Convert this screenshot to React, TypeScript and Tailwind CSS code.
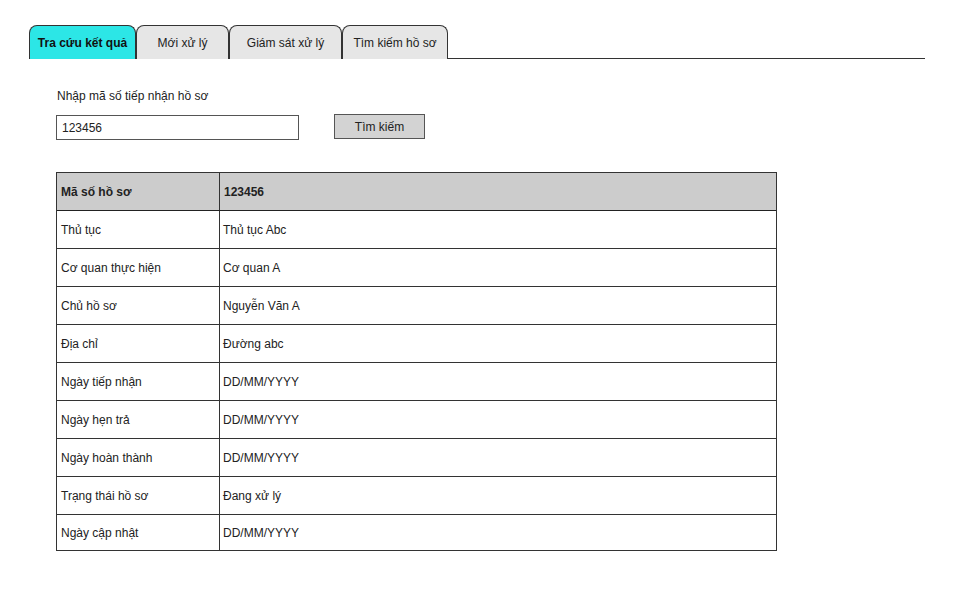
import React from "react";

const rows: [string, string][] = [
  ["Thủ tục", "Thủ tục Abc"],
  ["Cơ quan thực hiện", "Cơ quan A"],
  ["Chủ hồ sơ", "Nguyễn Văn A"],
  ["Địa chỉ", "Đường abc"],
  ["Ngày tiếp nhận", "DD/MM/YYYY"],
  ["Ngày hẹn trả", "DD/MM/YYYY"],
  ["Ngày hoàn thành", "DD/MM/YYYY"],
  ["Trạng thái hồ sơ", "Đang xử lý"],
  ["Ngày cập nhật", "DD/MM/YYYY"],
];

const tabs = [
  { label: "Tra cứu kết quả", w: "w-[107px]", active: true },
  { label: "Mới xử lý", w: "w-[93px]", active: false },
  { label: "Giám sát xử lý", w: "w-[113px]", active: false },
  { label: "Tìm kiếm hồ sơ", w: "w-[106px]", active: false },
];

export default function App() {
  return (
    <div className="w-[960px] h-[600px] bg-white text-[12px] text-[#222] font-['Liberation_Sans',sans-serif] pt-[24px]">
      <div className="ml-[29px] w-[896px] flex items-end border-b-[1.5px] border-[#333] h-[35px]">
        {tabs.map((t) => (
          <div
            key={t.label}
            className={`${t.w} h-[34px] -mb-[1px] flex items-center justify-center rounded-t-[8px] border-[1.5px] border-[#333] border-b-0 ${
              t.active ? "bg-[#2ce6e6] font-bold text-[#111]" : "bg-[#e6e6e6]"
            }`}
          >
            {t.label}
          </div>
        ))}
      </div>

      <div className="ml-[57px] mt-[28px]">Nhập mã số tiếp nhận hồ sơ</div>

      <div className="ml-[56px] mt-[9px] flex items-start gap-[35px]">
        <div className="mt-[1px] w-[243px] h-[25px] border-[1.5px] border-[#555] flex items-center px-[5px]">123456</div>
        <div className="w-[91px] h-[25px] border-[1.5px] border-[#555] bg-[#d3d3d3] flex items-center justify-center">Tìm kiếm</div>
      </div>

      <div className="ml-[56px] mt-[32px] w-[721px] border-[1.5px] border-[#333]">
        <div className="flex h-[38px] bg-[#cccccc] border-b-[1.5px] border-[#222] font-bold">
          <div className="w-[163px] border-r-[1.5px] border-[#333] flex items-center px-[4px]">Mã số hồ sơ</div>
          <div className="flex-1 flex items-center px-[4px]">123456</div>
        </div>
        {rows.map(([a, b], i) => (
          <div
            key={a}
            className={`flex ${i < rows.length - 1 ? "h-[38px] border-b-[1.5px] border-[#333]" : "h-[35px]"}`}
          >
            <div className="w-[163px] border-r-[1.5px] border-[#333] flex items-center px-[4px]">{a}</div>
            <div className="flex-1 flex items-center px-[3px]">{b}</div>
          </div>
        ))}
      </div>
    </div>
  );
}
